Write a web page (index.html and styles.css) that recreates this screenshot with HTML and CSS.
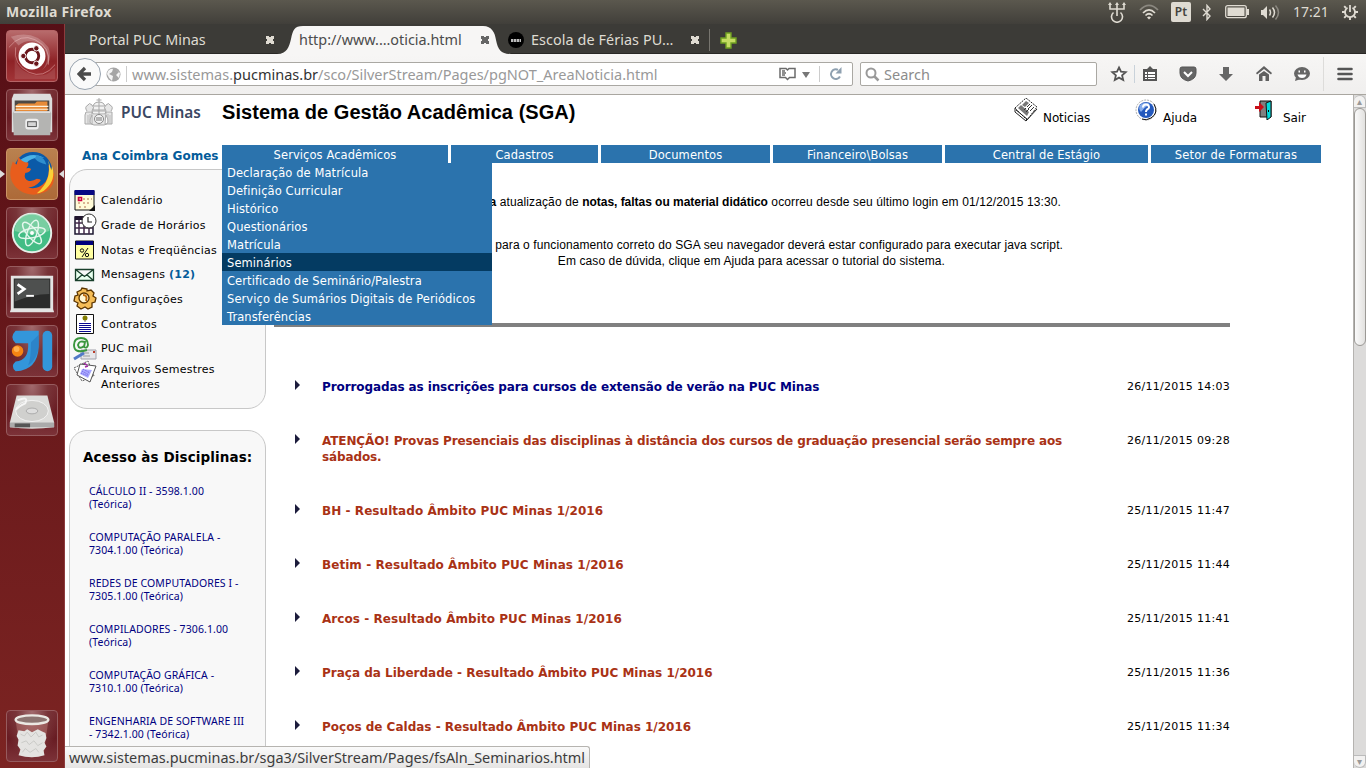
FILE: index.html
```html
<!DOCTYPE html>
<html lang="pt-BR">
<head>
<meta charset="utf-8">
<title>Sistema de Gestão Acadêmica (SGA)</title>
<link rel="stylesheet" href="styles.css">
</head>
<body>
<div class="desktop">
  <header class="panel">
    <span class="panel-title">Mozilla Firefox</span>
    <div class="tray">
      <svg class="t-net" width="20" height="22" viewBox="0 0 20 22" fill="none" stroke="#dfdbd2" stroke-width="1.6"><path d="M3 3v5h14V3M10 3v12M6.500 11.500a5.500 5.500 0 1 0 7 0"/><path d="M1 4l2-3 2 3zM8 4l2-3 2 3zM15 4l2-3 2 3z" fill="#dfdbd2" stroke="none"/></svg>
      <svg class="t-wifi" width="20" height="16" viewBox="0 0 20 16" fill="none" stroke="#dfdbd2" stroke-width="1.7"><path d="M1 6q9-9 18 0" stroke="#8b8880"/><path d="M4 9q6-6 12 0M6.500 11.500q3.500-3.500 7 0"/><path d="M8 13.500q2-2 4 0l-2 2z" fill="#dfdbd2" stroke="none"/></svg>
      <span class="lang">Pt</span>
      <svg class="t-bt" width="10" height="17" viewBox="0 0 10 17" fill="none" stroke="#dfdbd2" stroke-width="1.400"><path d="M1 5l7 7-3 3.500V1.500L8 5l-7 7"/></svg>
      <svg class="t-bat" width="24" height="14" viewBox="0 0 24 14"><rect x=".7" y=".7" width="20.600" height="12" rx="2" fill="none" stroke="#dfdbd2" stroke-width="1.300"/><path fill="#dfdbd2" d="M2.500 2.500h17v8.500h-17zM22 4h2v6h-2z"/></svg>
      <svg class="t-vol" width="21" height="17" viewBox="0 0 21 17" fill="none" stroke="#dfdbd2" stroke-width="1.500"><path d="M1 6h2l4-4v13l-4-4H1z" fill="#dfdbd2" stroke="none"/><path d="M9.500 5.500q2 3 0 6M12.500 3.500q4 5 0 10"/><path d="M15.500 1.500q6 7 0 14" stroke="#8b8880"/></svg>
      <span class="clock">17:21</span>
      <svg class="t-gear" width="16" height="16" viewBox="0 0 16 16" fill="none" stroke="#dfdbd2"><path d="M5.500 3.800a5 5 0 1 0 5 0" stroke-width="1.800"/><path d="M8 1v7" stroke-width="1.800"/><path d="M4 4L2.200 2.200M12 4l1.800-1.800M3 8H0M13 8h3M4 12l-1.800 1.800M12 12l1.800 1.800M8 13v3" stroke-width="1.900"/></svg>
    </div>
  </header>

  <div class="work">
    <nav class="launcher">
      <div class="tile dash"><svg viewBox="0 0 52 52"><path d="M2 17Q14 2 29 9Q46 17 43 35M50 35Q38 50 23 43Q6 35 9 17" fill="none" stroke="#e4a9a9" opacity=".6"/><path d="M4 6Q28-2 43 17Q49 31 36 41A17 17 0 0 0 12 15z" fill="#fff" opacity=".22"/><path d="M8 22Q8 42 30 46Q42 48 50 38V50H8z" fill="#fff" opacity=".1"/><circle cx="26" cy="26" r="14" fill="#fff"/><circle cx="26" cy="26" r="7" fill="none" stroke="#6a151a" stroke-width="3"/><g fill="#6a151a" stroke="#fff"><circle cx="17" cy="26" r="2.800"/><circle cx="30.500" cy="18" r="2.800"/><circle cx="30.500" cy="34" r="2.800"/></g></svg></div>
      <div class="tile"><svg viewBox="0 0 52 52"><path d="M7 4h38l2 5v35H5V9z" fill="#ddd"/><path d="M8 11h36v13H8z" fill="#4d4945"/><path d="M9 16l3-2h17l2-2h11v12H9z" fill="#e78b38"/><path d="M9 17h34M9 20h34" stroke="#fff3de" stroke-width="1.200"/><path d="M6 24q1-3 4-2h32q3-1 4 2l-1 23H7z" fill="#b4b4b2"/><path d="M7 22h38v2H7z" fill="#ddd"/><rect x="20" y="31" width="12" height="9" rx="2" fill="#ddd" stroke="#eee" stroke-width="2"/><rect x="21.500" y="33" width="9" height="5" fill="#d6d6d6" stroke="#555"/></svg></div>
      <div class="tile active"><svg viewBox="0 0 52 52"><circle cx="27" cy="23" r="20" fill="#0b5aa8"/><path d="M13 12Q25 2 39 9Q25 8 20 15z" fill="#49b3e6"/><path d="M31 6q8 3 10 10-8-1-12-6z" fill="#2f8fce"/><path d="M4 20l2-7 4 3 2-8q3 6 10 6 1 3-2 6 4-1 5 1-1 3-6 4-2 6 3 8 5 1 9-2 4 0 4 2-6 7-13 7 10 3 18-6 5-8 3-18l6 10q1 14-10 19-14 6-26-2-12-9-9-23z" fill="#e85d1c"/><path d="M43 12l3 10 1-4q4 14-6 23-5 5-10 5 16-13 12-34z" fill="#fbd037"/></svg></div>
      <div class="tile"><svg viewBox="0 0 52 52"><circle cx="26" cy="26" r="20" fill="#43bd85" stroke="#e7efe9" stroke-width="2"/><path d="M8 24a18 18 0 0 1 36 0q-18 6-36 0z" fill="#8fd5ad" opacity=".7"/><g fill="none" stroke="#e4f7ed" stroke-width="1.500"><ellipse cx="26" cy="26" rx="14" ry="5" transform="rotate(-12 26 26)"/><ellipse cx="26" cy="26" rx="14" ry="5" transform="rotate(50 26 26)"/><ellipse cx="26" cy="26" rx="14" ry="5" transform="rotate(110 26 26)"/></g><circle cx="26" cy="26" r="2" fill="#fff"/></svg></div>
      <div class="tile"><svg viewBox="0 0 52 52"><path d="M4 9h44v35l1 3H3l1-3z" fill="#e4e4e3"/><path d="M7 12h38v31H7z" fill="#2b2c2b"/><path d="M8 13h36v15q-18 0-36 8z" fill="#4e504f"/><path d="M11 18l7 5-7 5" fill="none" stroke="#fff" stroke-width="2.800"/><path d="M20 30h8" stroke="#fff" stroke-width="2"/></svg></div>
      <div class="tile"><svg viewBox="0 0 52 52"><path d="M9 5h24v16Q32 46 9 47q-6-5 0-10 14-1 13-19H9q-7-6 0-13z" fill="#3396da"/><rect x="37" y="5" width="10" height="42" rx="5" fill="#3396da"/><path d="M33 9v12q-1 13-11 20 3-7 3-24z" fill="#2476bd" opacity=".55"/><circle cx="11" cy="26" r="6" fill="#f58512"/><circle cx="10" cy="24" r="3" fill="#ffb04e"/></svg></div>
      <div class="tile"><svg viewBox="0 0 52 52"><path d="M10 11h32l7 28v5q-23 3-46 0v-5z" fill="#dcdcda"/><path d="M3 39h46v5H3z" fill="#aaa"/><path d="M8 40h16v4H8z" fill="#555"/><ellipse cx="26" cy="27" rx="17" ry="11" fill="#d0d0ce" stroke="#f2f2f2"/><ellipse cx="26" cy="27" rx="6" ry="3" fill="#ddd" stroke="#aaa"/><path d="M11 16q12-5 8 3-7 3-10 7" fill="none" stroke="#f6f6f6" stroke-width="2"/></svg></div>
      <div class="tile trash"><svg viewBox="0 0 52 52"><path d="M9 10h34l-5 36q-12 4-24 0z" fill="#ba7976" opacity=".5"/><path d="M12 46l2-6-3-4 1-6-2-4 2-6 6 1 3-2 5 3 6-3 4 2 4 2 1 5-2 5 2 4-3 4 1 5q-13 4-27 0z" fill="#e4e3e1"/><path d="M14 24l4 2 3-4 4 5 5-5 3 5 4-2M15 33l5-2 3 4 5-4 4 5 5-3M16 43l3-4 5 4 6-4 3 4" fill="none" stroke="#c9c9c6"/><ellipse cx="26" cy="9" rx="17" ry="4.500" fill="#8c7471" stroke="#ebe8e3" stroke-width="2.500"/></svg></div>
    </nav>

    <main class="window">
      <div class="tabs">
        <div class="tab first"><span>Portal PUC Minas</span><b class="close"></b></div>
        <div class="tab current"><svg class="tab-shape" viewBox="0 0 234 30" width="234" height="30"><path d="M0 30C10 30 12 23 14 15C16 6 17 2 26 2H206C215 2 218 9 219 16C221 26 224 30 234 30z" fill="#f7f6f5"/></svg><span>http://www.…oticia.html</span><b class="close"></b></div>
        <div class="tab third"><i class="fav"></i><span>Escola de Férias PU…</span><b class="close"></b></div>
        <div class="new-tab"><svg width="17" height="17" viewBox="0 0 17 17"><path d="M6 1h5v5h5v5h-5v5H6v-5H1V6h5z" fill="#c5dc62" stroke="#6f9f22" stroke-width="1.400"/></svg></div>
      </div>

      <div class="toolbar">
        <div class="back"><svg width="16" height="16" viewBox="0 0 16 16"><path d="M8 2L2 8l6 6M3 8h11" fill="none" stroke="#4c4c4c" stroke-width="3.300"/></svg></div>
        <div class="url">
          <svg width="15" height="15" viewBox="0 0 15 15"><circle cx="7.500" cy="7.500" r="7" fill="#a5a5a5"/><path d="M2 4q3-3 5-2l-1 3-3 2 4 2-1 5q-3-2-5-7zM9 2l4 3-3 3 3 3 1-5z" fill="#f4f4f4"/></svg>
          <i class="vline"></i>
          <span class="address">www.sistemas.<em>pucminas.br</em>/sco/SilverStream/Pages/pgNOT_AreaNoticia.html</span>
          <svg class="reader" width="17" height="14" viewBox="0 0 17 14" fill="none" stroke="#6b6b6b" stroke-width="1.500"><path d="M8.500 3L7 1.500H1v9h5.500l2 2 2-2H16v-9h-6z"/><path d="M3 4h3M3 6h4M3 8h3"/></svg>
          <svg class="drop" width="8" height="6" viewBox="0 0 8 6"><path d="M0 0h8L4 6z" fill="#777"/></svg>
          <i class="vline"></i>
          <svg class="reload" width="14" height="14" viewBox="0 0 14 14"><path d="M11 9.500A4.800 4.800 0 1 1 9 2.800" fill="none" stroke="#8ea0b0" stroke-width="2"/><path d="M12.500 0v6.500H6.500z" fill="#8ea0b0"/></svg>
        </div>
        <div class="search"><svg width="15" height="15" viewBox="0 0 15 15" fill="none" stroke="#999"><circle cx="6" cy="6" r="4.500" stroke-width="2"/><path d="M9.500 9.500l4 4" stroke-width="2.500"/></svg><span>Search</span></div>
        <div class="tools">
          <svg width="18" height="18" viewBox="0 0 18 18"><path d="M9 2.500l2 4.200 4.700.4-3.600 3.300 1.100 4.600L9 12.600 4.800 15l1.100-4.600-3.600-3.300 4.700-.4z" fill="#fff" stroke="#555" stroke-width="1.800"/></svg>
          <i></i>
          <svg class="clip" width="16" height="18" viewBox="0 0 16 18"><path d="M1 4h4l3-3 3 3h4v12H1z" fill="#555"/><path d="M3 7h2v2H3zM6 7h7v2H6zM3 10h2v2H3zM6 10h7v2H6zM3 13h2v1H3zM6 13h7v1H6z" fill="#fff"/></svg>
          <svg class="pocket" width="18" height="18" viewBox="0 0 18 18"><path d="M1 4q0-2 2-2h12q2 0 2 2v4q0 6-8 8-8-2-8-8z" fill="#666" stroke="#555"/><path d="M5 7l4 4 4-4" fill="none" stroke="#fff" stroke-width="2"/></svg>
          <svg class="down-arrow" width="16" height="18" viewBox="0 0 16 18"><path d="M5 2h6v7h4l-7 7-7-7h4z" fill="#666"/></svg>
          <svg class="home" width="16" height="18" viewBox="0 0 16 18"><path d="M8 1l8 7-1 1.500L8 4 1 9.500 0 8zM3 9.500L8 6l5 3.500V16H9.500v-5h-3v5H3z" fill="#606060"/></svg>
          <svg class="chat" width="18" height="18" viewBox="0 0 18 18"><ellipse cx="9" cy="8.500" rx="8" ry="6.500" fill="#666"/><path d="M3 12l-1 4 6-2z" fill="#666"/><path d="M5.500 5.500h1.500v2H5.500zM11 5.500h1.500v2H11z" fill="#fff"/><path d="M4.500 9.500h9q-1 3.500-4.500 3.500t-4.500-3.500z" fill="#fff"/></svg>
          <i class="sep"></i>
          <svg width="16" height="18" viewBox="0 0 16 18"><path d="M1.500 4h13M1.500 9h13M1.500 14h13" stroke="#555" stroke-width="2.600" stroke-linecap="round"/></svg>
        </div>
      </div>

      <div class="viewport">
        <div class="page">
          <div class="masthead">
            <svg class="crest" width="30" height="29" viewBox="0 0 30 29" fill="none" stroke="#a9a9a9"><path d="M15 0v4M12.500 2h5"/><path d="M9 12q-1-8 6-8t6 8zM8 13h14l-1 3H9zM10 8h10M15 4v12" fill="#f2f2f2"/><path d="M3 13q-3-4 1-6 1-3 4 0 3 2 0 6M22 13q-3-4 0-6 3-3 4 0 4 2 1 6M2 14h6v12H1v-9zM22 14h6v12h-7zM8 17q-5 9 2 10h10q7-1 2-10" fill="#e6e6e6"/><ellipse cx="15" cy="21" rx="4.500" ry="4.500" fill="#f4f4f4" stroke="#888"/><path d="M12 20h6M12 22h6" stroke="#777"/><path d="M4 17v9M6 16v10M24 16v10M26 17v9" stroke="#bbb"/></svg>
            <span class="brand">PUC Minas</span>
            <h1>Sistema de Gestão Acadêmica (SGA)</h1>
            <div class="quick">
              <a class="q-news"><svg width="24" height="24" viewBox="0 0 24 24"><path d="M1 10L12 0l11 9-10 13z" fill="#fff" stroke="#222" stroke-dasharray="2 1"/><path d="M1 10v4l11 9 11-12M2 12l11 9" fill="none" stroke="#222"/><path d="M4 10l3-3 8 7-2 4zM8 7l4-4 3 2-4 4z" fill="#777"/><path d="M13 9l3-3M14 11l4-4M16 13l4-4M10 12l2-2M12 14l3-3" stroke="#333"/></svg><span>Noticias</span></a>
              <a class="q-help"><svg width="22" height="24" viewBox="0 0 22 24"><circle cx="11" cy="12" r="10" fill="#fff" stroke="#aaa" stroke-dasharray="2 1"/><path d="M19 6q5 9-3 14-5 3-9 1" fill="none" stroke="#111"/><circle cx="11" cy="12" r="8" fill="#2459bd"/><path d="M5 7q5-4 10-1-5 3-9 8-3-3-1-7z" fill="#86adec"/><path d="M8 9.500q0-3 3-3t3 3q0 1-2 2-1 1-1 2.500M11 15.500v2" fill="none" stroke="#fff" stroke-width="2"/></svg><span>Ajuda</span></a>
              <a class="q-exit"><svg width="18" height="20" viewBox="0 0 18 20"><path d="M5 1h11v16H5z" fill="#808080" stroke="#111"/><path d="M11 3l5-2v16l-4 3z" fill="#00dede" stroke="#111"/><path d="M0 6h4V2l5 5-5 5V9H0z" fill="#c90e18"/><path d="M13 10h1v2h-1z"/></svg><span>Sair</span></a>
            </div>
          </div>

          <div class="nav-row">
            <strong class="user">Ana Coimbra Gomes</strong>
            <div class="menu-bar">
              <div class="menu">Serviços Acadêmicos
                <ul class="dropdown"><li>Declaração de Matrícula</li><li>Definição Curricular</li><li>Histórico</li><li>Questionários</li><li>Matrícula</li><li class="hover">Seminários</li><li>Certificado de Seminário/Palestra</li><li>Serviço de Sumários Digitais de Periódicos</li><li>Transferências</li></ul>
              </div>
              <div class="menu">Cadastros</div><div class="menu">Documentos</div><div class="menu">Financeiro\Bolsas</div><div class="menu">Central de Estágio</div><div class="menu">Setor de Formaturas</div>
            </div>
          </div>

          <div class="columns">
            <aside class="sidebar">
              <div class="box links">
                <a><svg viewBox="0 0 24 24"><path d="M2 2h19v19H2z" fill="#fffbd8" stroke="#111"/><path d="M1.500 1h20v5h-20z" fill="#070783"/><path d="M5 9h2v2H5zM10 9h2v2h-2zM14 9h2v2h-2zM18 9h1v2h-1zM10 13h2v2h-2zM14 13h2v2h-2zM5 13h2v2H5zM6 17h2v2H6zM11 17h2v2h-2z" fill="#d9b592"/><path d="M5.500 8.500h3v3h-3z" fill="none" stroke="#d00042" stroke-width="1.600"/><path d="M16 22l6-6v6z" fill="#111"/></svg>Calendário</a>
                <a><svg viewBox="0 0 24 24"><path d="M2 4h18v17H2z" fill="#fff" stroke="#1c1730" stroke-width="1.500"/><path d="M2 3h9v4H2z" fill="#20142e"/><path d="M2 10h18M2 15h18M6 7v14M11 7v14M16 7v14" stroke="#412949" stroke-width="1.500"/><circle cx="16" cy="8" r="7" fill="#fff" stroke="#333"/><path d="M15 4v5h4" fill="none" stroke="#222" stroke-width="1.200"/></svg>Grade de Horários</a>
                <a><svg viewBox="0 0 24 24"><path d="M2.500 3h18v18h-18z" fill="#ffffa1" stroke="#111"/><path d="M3 3h17v4H3z" fill="#00007c"/><path d="M15 10l-6 9" stroke="#111"/><circle cx="9" cy="12.500" r="1.700" fill="none" stroke="#111"/><circle cx="14" cy="17" r="1.700" fill="none" stroke="#111"/></svg>Notas e Freqüências</a>
                <a><svg viewBox="0 0 24 24"><path d="M2.500 6.500h18v11h-18zM2.500 6.500l9 7 9-7M2.500 17.500l7-6M20.500 17.500l-7-6" fill="#e8ffef" stroke="#183f2b" stroke-width="1.300"/></svg><span>Mensagens <b>(12)</b></span></a>
                <a><svg viewBox="0 0 24 24"><path d="M8 3l1-2 5 1v2l4-1 3 3-1 3 3 2-1 4-3 1v4l-4 2-3-2-4 2-4-3 1-3-4-2 1-5 3-1-1-3z" fill="#f5bd57" stroke="#5a3400" stroke-width="1.300"/><circle cx="11" cy="11" r="5" fill="#fff7d5" stroke="#5a3400" stroke-width="1.300"/><path d="M10 8q5 0 3 6" fill="none" stroke="#bf6c0c" stroke-width="2"/></svg>Configurações</a>
                <a><svg viewBox="0 0 24 24"><path d="M3.500 2.500h17v19h-17z" fill="#fff" stroke="#111"/><circle cx="12" cy="6" r="2.500" fill="#827d00"/><path d="M6 11.500h12M6 13.500h12M6 15.500h12M6 17.500h12M6 19.500h12" stroke="#080891"/><path d="M12 8v2" stroke="#777"/></svg>Contratos</a>
                <a><svg viewBox="0 0 24 24"><path d="M8 13h15v9H8z" fill="#e6e6e9" stroke="#a0a0aa"/><path d="M20 14h2v2h-2z" fill="#ba3c29"/><path d="M10 16h6M10 19h7" stroke="#999"/><path d="M1 22l10-6" stroke="#5279c7" stroke-width="3"/><path d="M14 13Q1 17 1 8q0-7 7-7t7 7q-1 4-4 2l1-5q-6-2-7 3 1 5 6 1" fill="none" stroke="#3a963e" stroke-width="1.900"/></svg>PUC mail</a>
                <a class="tall"><svg viewBox="0 0 24 24"><path d="M1 8l14-7 6 15-12 5z" fill="#fff" stroke="#555" stroke-dasharray="2 1"/><path d="M7 4l16 2-6 16-13-7z" fill="#fff" stroke="#555"/><path d="M9 9l10 1-4 8-8-4z" fill="#aaaaff"/><path d="M9 11l7 4M10 9l7 4M8 13l7 3" stroke="#6b5be0" stroke-dasharray="1 1"/><path d="M11 3l3 2M12 7l3-1" stroke="#a026a3" stroke-width="1.500"/></svg><span>Arquivos Semestres<br>Anteriores</span></a>
              </div>
              <div class="box courses">
                <h2>Acesso às Disciplinas:</h2>
                <p>CÁLCULO II - 3598.1.00<br>(Teórica)</p><p>COMPUTAÇÃO PARALELA -<br>7304.1.00 (Teórica)</p><p>REDES DE COMPUTADORES I -<br>7305.1.00 (Teórica)</p><p>COMPILADORES - 7306.1.00<br>(Teórica)</p><p>COMPUTAÇÃO GRÁFICA -<br>7310.1.00 (Teórica)</p><p>ENGENHARIA DE SOFTWARE III<br>- 7342.1.00 (Teórica)</p>
              </div>
            </aside>
            <section class="content">
              <div class="notice">
                <p class="n1"><b>Nenhuma</b> atualização de <b>notas, faltas ou material didático</b> ocorreu desde seu último login em 01/12/2015 13:30.</p>
                <p class="n2">para o funcionamento correto do SGA seu navegador deverá estar configurado para executar java script.</p>
                <p class="n3">Em caso de dúvida, clique em Ajuda para acessar o tutorial do sistema.</p>
              </div>
              <div class="news">
                <article class="unread"><i></i><h3>Prorrogadas as inscrições para cursos de extensão de verão na PUC Minas</h3><time>26/11/2015 14:03</time></article>
                <article class="two"><i></i><h3>ATENÇÃO! Provas Presenciais das disciplinas à distância dos cursos de graduação presencial serão sempre aos<br>sábados.</h3><time>26/11/2015 09:28</time></article>
                <article><i></i><h3>BH - Resultado Âmbito PUC Minas 1/2016</h3><time>25/11/2015 11:47</time></article>
                <article><i></i><h3>Betim - Resultado Âmbito PUC Minas 1/2016</h3><time>25/11/2015 11:44</time></article>
                <article><i></i><h3>Arcos - Resultado Âmbito PUC Minas 1/2016</h3><time>25/11/2015 11:41</time></article>
                <article class="exact"><i></i><h3>Praça da Liberdade - Resultado Âmbito PUC Minas 1/2016</h3><time>25/11/2015 11:36</time></article>
                <article class="exact"><i></i><h3>Poços de Caldas - Resultado Âmbito PUC Minas 1/2016</h3><time>25/11/2015 11:34</time></article>
              </div>
            </section>
          </div>
        </div>
        <div class="scrollbar"><div class="arrow">▴</div><div class="thumb"></div><div class="arrow down">▾</div></div>
        <div class="status">www.sistemas.pucminas.br/sga3/SilverStream/Pages/fsAln_Seminarios.html</div>
      </div>
    </main>
  </div>
</div>
</body>
</html>
```
FILE: styles.css
```css
* { box-sizing: border-box; }
body, h1, h2, h3, p, ul { margin: 0; padding: 0; }
body { width: 1366px; height: 768px; overflow: hidden; font-family: "DejaVu Sans", sans-serif; white-space: nowrap; }
svg { display: block; flex: none; }
i { flex: none; }
.desktop { height: 768px; display: flex; flex-direction: column; }

/* system panel */
.panel { height: 24px; flex: none; display: flex; justify-content: space-between; align-items: center; padding: 0 8px 0 6px; background: linear-gradient(#5b584e, #413f3a); color: #dfdbd2; font-family: "Noto Sans", sans-serif; }
.panel-title { font-size: 14px; font-weight: 700; letter-spacing: .28px; padding-bottom: 1px; }
.tray { display: flex; align-items: center; height: 24px; }
.t-wifi { margin-left: 12px; }
.lang { margin-left: 12px; width: 20px; height: 20px; border-radius: 2px; background: #dfdbd2; color: #45433e; font-size: 12px; font-weight: 600; line-height: 20px; text-align: center; }
.t-bt { margin-left: 11px; }
.t-bat { margin-left: 13px; }
.t-vol { margin-left: 11px; }
.clock { margin-left: 12px; width: 37px; font-size: 14px; line-height: 20px; padding-bottom: 1px; }
.t-gear { margin-left: 12px; }

.work { flex: 1; min-height: 0; display: flex; }
.launcher { width: 65px; flex: none; padding: 6px; display: flex; flex-direction: column; gap: 7px; background: linear-gradient(#560f16, #621519 30%, #7c2422); border-right: 1px solid #8d3b3d; }
.tile { width: 52px; height: 52px; flex: none; border: 1px solid #965b5e; border-radius: 4px; background: radial-gradient(ellipse at 50% 0, #a26b6e, #783438 45%, transparent 75%), linear-gradient(#752a30, #681c23 55%, #7c3238); }
.tile svg { width: 50px; height: 50px; }
.tile.dash { background: linear-gradient(#b86b6c, #8e2226 60%, #a13437); border-color: #b56466; }
.tile.active { position: relative; background: linear-gradient(#b9814f, #ad6a38); border-color: #cb9365; }
.tile.active::before, .tile.active::after { content: ""; position: absolute; top: 21px; border: 4px solid transparent; }
.tile.active::before { left: -7px; border-left: 5px solid #ddd; border-right: 0; }
.tile.active::after { right: -7px; border-right: 5px solid #ddd; border-left: 0; }
.tile.trash { margin-top: auto; }

/* browser window */
.window { flex: 1; min-width: 0; display: flex; flex-direction: column; }
.tabs { height: 30px; flex: none; display: flex; background: #3c3b37; border-bottom: 1px solid #292825; color: #dfdbd2; font: 14.400px "Noto Sans", sans-serif; }
.tab { display: flex; align-items: center; height: 30px; }
.first { width: 209px; padding-left: 24px; }
.first span { width: 182px; }
.close { width: 8px; height: 8px; margin-top: 2px; background: linear-gradient(45deg, transparent 35%, currentColor 35% 65%, transparent 65%), linear-gradient(-45deg, transparent 35%, currentColor 35% 65%, transparent 65%); flex: none; }
.current { width: 234px; position: relative; padding-left: 25px; color: #4c4c4c; }
.tab-shape { position: absolute; left: 3px; top: 0; }
.current span, .current .close { position: relative; }
.current .close { color: #666; }
.current span { width: 182px; }
.third { width: 201px; }
.fav { width: 16px; height: 16px; border-radius: 8px; margin-top: 2px; background: repeating-linear-gradient(90deg, #bbb 0 2px, #555 2px 3px) center / 10px 3px no-repeat #000; }
.third span { width: 160px; margin-left: 7px; letter-spacing: .07px; }
.new-tab { border-left: 1px solid #77756f; height: 22px; margin-top: 5px; padding: 3px 10px; }
.toolbar { height: 41px; flex: none; display: flex; align-items: center; background: linear-gradient(#f7f6f5, #f0efee); border-bottom: 1px solid #a9a6a0; font: 14.500px "Noto Sans", sans-serif; }
.back { position: relative; z-index: 1; width: 32px; height: 32px; margin-left: 4px; flex: none; border: 1px solid #98a3af; border-radius: 50%; background: #fafafa; display: grid; place-items: center; }
.url { width: 764px; height: 24px; margin-left: -12px; padding-left: 16px; border: 1px solid #aaa8a3; border-radius: 2px; background: #fff; display: flex; align-items: center; color: #999; }
.vline { width: 1px; height: 16px; background: #ccc; margin-left: 5px; }
.address { width: 647px; margin-left: 5px; }
.address em { font-style: normal; color: #333; }
.drop { margin-left: 6px; margin-top: 2px; }
.drop + .vline { margin-left: 9px; }
.reload { margin-left: 9px; }
.search { width: 237px; height: 24px; margin-left: 7px; padding-left: 4px; border: 1px solid #aaa8a3; border-radius: 2px; background: #fff; display: flex; align-items: center; gap: 4px; color: #8c8c8c; }
.tools { display: flex; align-items: center; padding-left: 13px; }
.tools i { width: 1px; height: 18px; margin-left: 6px; background: #c9d2da; }
.tools .clip { margin-left: 7px; }
.tools .pocket { margin-left: 21px; }
.tools .down-arrow { margin-left: 21px; }
.tools .home { margin-left: 22px; }
.tools .chat { margin-left: 21px; }
.tools .sep { margin: 0 13px 0 12px; height: 34px; background: #dddcda; }

.viewport { flex: 1; min-height: 0; position: relative; display: flex; background: #fff; overflow: hidden; }
.page { flex: 1; min-width: 0; }
.masthead { height: 50px; display: flex; padding: 3px 0 0 19px; }
.brand { width: 101px; margin: 5px 0 0 7px; font: 600 15.400px/20px "Noto Sans", sans-serif; color: #3b4763; }
h1 { width: 792px; font: bold 20px/28px "Liberation Sans", Arial, sans-serif; letter-spacing: .06px; }
.quick { display: flex; font-size: 12px; }
.quick a { display: flex; gap: 5px; }
.quick span { margin-top: 13px; letter-spacing: -.1px; }
.q-news { width: 121px; }
.q-help { width: 120px; }
.q-help span { letter-spacing: 0; margin-left: 1px; }
.q-exit { padding-top: 2px; }
.q-exit span { margin-top: 11px; margin-left: 5px; }

.nav-row { height: 18px; display: flex; font-size: 11.500px; line-height: 20px; letter-spacing: .08px; }
.user { width: 157px; padding-left: 17px; font-size: 12px; line-height: 22px; letter-spacing: 0; color: #045c9a; }
.menu-bar { display: grid; grid-template-columns: 226px 147px 169px 169px 203px 170px; column-gap: 3px; }
.menu { position: relative; background: #2b73ad; color: #fff; text-align: center; height: 18px; }
.menu:last-child { letter-spacing: .25px; }
.dropdown { position: absolute; z-index: 3; left: 0; top: 18px; width: 270px; background: #2b73ad; list-style: none; text-align: left; }
.dropdown li { height: 18px; padding-left: 5px; }
.dropdown .hover { background: #043b62; }

.columns { display: flex; padding-top: 6px; }
.sidebar { width: 209px; flex: none; padding-left: 4px; }
.box { width: 197px; background: #f8f8f8; border: 1px solid #c8c8c8; border-radius: 18px; }
.links { height: 240px; padding: 18.400px 0 0 3px; font-size: 11px; line-height: 15px; letter-spacing: .24px; }
.links a { display: flex; align-items: center; gap: 4px; height: 24.660px; }
.links svg { width: 24px; height: 24px; }
.links b { color: #045c9a; }
.links .tall { height: 32px; align-items: flex-start; margin-top: .6px; }
.links .tall svg { margin-top: -2px; }
.courses { height: 360px; margin-top: 21px; padding: 18px 0 0 19px; }
.courses h2 { font-size: 13.500px; line-height: 17px; letter-spacing: .1px; margin: 0 0 19px -6px; }
.courses p { margin-bottom: 20px; font: 10.500px/13px "Noto Sans", sans-serif; letter-spacing: .1px; color: #000080; }

.content { width: 956px; flex: none; }
.notice { height: 158px; padding-top: 25px; border-bottom: 4px solid #808080; font: 12px/16px "Liberation Sans", Arial, sans-serif; text-align: right; }
.n1 { padding-right: 169px; letter-spacing: .12px; }
.n1 b + b { letter-spacing: -.03px; }
.n2 { padding: 27px 167px 0 0; letter-spacing: .1px; }
.n3 { padding-right: 285px; letter-spacing: .1px; }
.news { padding-top: 51px; }
article { height: 54px; display: flex; padding-left: 21px; font-size: 11px; line-height: 18px; }
article.two { height: 70px; }
article i { width: 5px; height: 10px; margin-top: 2px; background: #1c1c3c; clip-path: polygon(0 0, 100% 50%, 0 100%); }
article h3 { width: 780px; margin: 1px 0 0 22px; font-size: 12px; line-height: 16px; letter-spacing: .06px; color: #a93215; }
article time { margin-left: auto; letter-spacing: .28px; }
.unread h3 { color: #000080; letter-spacing: -.1px; }
.two h3 { letter-spacing: -.12px; }
.exact h3 { letter-spacing: 0; }

.scrollbar { width: 13px; flex: none; background: #dcdbda; border-left: 1px solid #b5b3b0; display: flex; flex-direction: column; font-size: 10px; }
.arrow { height: 13px; border: 1px solid #bbb; border-left: 0; border-radius: 6px 6px 0 0; background: #f2f1f0; color: #999; line-height: 12px; text-align: center; }
.arrow.down { margin-top: auto; border-radius: 0 0 6px 6px; }
.thumb { height: 238px; border: 1px solid #9b9995; border-radius: 6px; background: linear-gradient(90deg, #fafafa, #e2e1df); }
.status { position: absolute; left: 0; bottom: 0; height: 22px; width: 525px; padding-left: 4px; border: 1px solid #b6b4b0; border-width: 1px 1px 0 0; border-radius: 0 3px 0 0; background: linear-gradient(#fafafa, #e5e4e3); color: #3c3c3c; font: 14.450px/21px "Noto Sans", sans-serif; }
```
